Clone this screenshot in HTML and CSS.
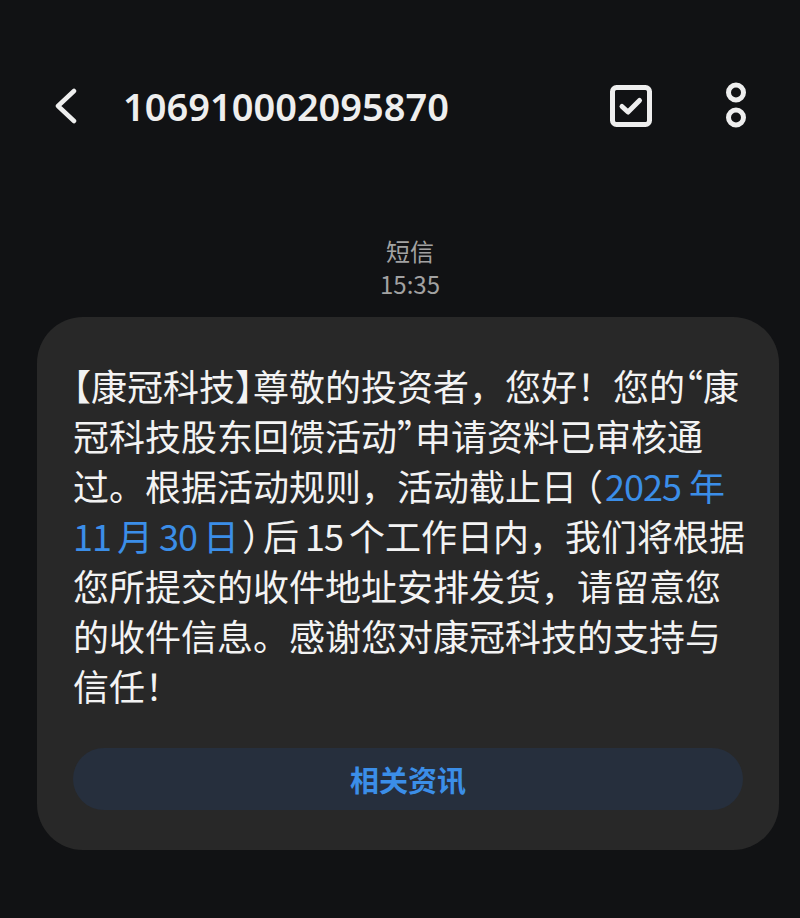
FILE: index.html
```html
<!DOCTYPE html>
<html lang="zh-CN">
<head>
<meta charset="utf-8">
<link rel="stylesheet" href="styles.css">
</head>
<body>
<div class="screen">
  <header class="topbar">
    <div class="back">
      <svg width="26" height="36" viewBox="0 0 26 36"><path d="M21 3 L5 18 L21 33" fill="none" stroke="#eeeeee" stroke-width="4.5" stroke-linecap="round" stroke-linejoin="round"/></svg>
    </div>
    <div class="title">106910002095870</div>
    <div class="actions">
      <svg class="check" width="44" height="44" viewBox="0 0 44 44"><rect x="3.5" y="3.5" width="37" height="37" rx="4" fill="none" stroke="#eeeeee" stroke-width="5"/><path d="M13 22.5 L19 28 L30.5 16.5" fill="none" stroke="#eeeeee" stroke-width="5" stroke-linecap="round" stroke-linejoin="round"/></svg>
      <svg class="more" width="24" height="46" viewBox="0 0 24 46"><circle cx="12" cy="10.5" r="7.5" fill="none" stroke="#eeeeee" stroke-width="5"/><circle cx="12" cy="35.5" r="7.5" fill="none" stroke="#eeeeee" stroke-width="5"/></svg>
    </div>
  </header>

  <div class="meta">
    <div class="meta-line">短信</div>
    <div class="meta-line">15:35</div>
  </div>

  <div class="bubble">
    <p class="msg">
      <span class="ln"><span class="half">【</span>康冠科技<span class="half">】</span>尊敬的投资者，您好！您的<span class="half">“</span>康</span>
      <span class="ln">冠科技股东回馈活动<span class="half">”</span>申请资料已审核通</span>
      <span class="ln">过。根据活动规则，活动截止日<span class="half open">（</span><span class="link"><span class="num">2025</span><span class="sp"></span>年</span></span>
      <span class="ln"><span class="link"><span class="num">11</span><span class="sp-s"></span>月<span class="sp-s"></span><span class="num">30</span><span class="sp-s"></span>日</span><span class="half close">）</span>后<span class="sp-s"></span><span class="num">15</span><span class="sp-s"></span>个工作日内，我们将根据</span>
      <span class="ln">您所提交的收件地址安排发货，请留意您</span>
      <span class="ln">的收件信息。感谢您对康冠科技的支持与</span>
      <span class="ln">信任！</span>
    </p>
    <div class="btn">相关资讯</div>
  </div>
</div>
</body>
</html>
```

FILE: styles.css
```css
html, body {
  margin: 0;
  padding: 0;
  background: #111214;
}
body {
  font-family: "Noto Sans CJK SC", "Noto Sans", sans-serif;
  color: #f2f2f2;
}
.screen {
  width: 800px;
  height: 918px;
  overflow: hidden;
}
.topbar {
  display: flex;
  align-items: center;
  height: 60px;
  margin-top: 76px;
  padding: 0 0 0 53px;
}
.back {
  display: flex;
  align-items: center;
  width: 26px;
  height: 36px;
}
.title {
  margin-left: 44px;
  font-size: 38px;
  font-weight: 600;
  color: #eeeeee;
  font-family: "Noto Sans", "Noto Sans CJK SC", sans-serif;
  flex: 1;
}
.actions {
  display: flex;
  align-items: center;
  gap: 71px;
  padding-right: 52px;
}
.more {
  margin-top: -2px;
}
.meta {
  margin-top: 98px;
  text-align: center;
  color: #a2a2a2;
  font-size: 24px;
  line-height: 33px;
  padding-left: 20px;
}
.bubble {
  margin: 17px 21px 0 37px;
  background: #282828;
  border-radius: 46px;
  padding: 43px 20px 40px 36px;
}
.msg {
  margin: 0;
  font-size: 36px;
  line-height: 50px;
  color: #f3f3f3;
}
.ln {
  display: block;
  white-space: nowrap;
}
.half {
  font-feature-settings: "halt" 1;
}
.open {
  margin-left: 8px;
  margin-right: 2px;
}
.close {
  margin-left: 3px;
  margin-right: 3px;
}
.num {
  letter-spacing: -1px;
}
.sp {
  display: inline-block;
  width: 8px;
}
.sp-s {
  display: inline-block;
  width: 6px;
}
.link {
  color: #3b8ee8;
}
.btn {
  margin: 38px 16px 0 0;
  height: 62px;
  border-radius: 31px;
  background: #262f3d;
  color: #3b8ee8;
  font-size: 29px;
  font-weight: 700;
  display: flex;
  align-items: center;
  justify-content: center;
}
```
